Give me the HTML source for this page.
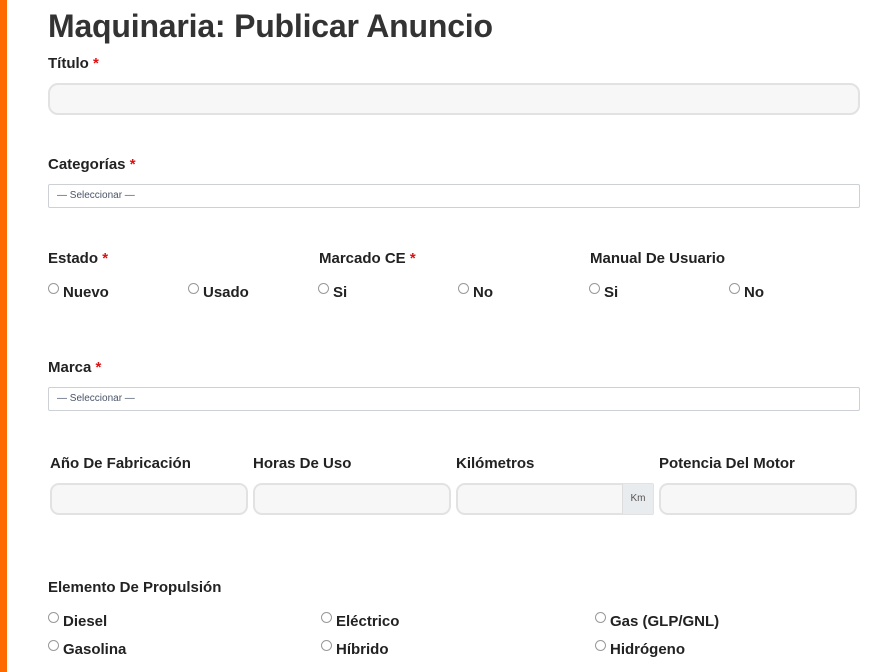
<!DOCTYPE html>
<html><head><meta charset="utf-8"><style>
*{margin:0;padding:0;box-sizing:border-box}
body{width:885px;height:672px;background:#fff;position:relative;overflow:hidden;font-family:"Liberation Sans",Arial,sans-serif;color:#222}
.bar{position:absolute;left:0;top:0;width:7px;height:672px;background:#ff6a00}
.a{position:absolute}
h1{position:absolute;left:48px;top:8px;font-size:32px;font-weight:bold;color:#333;letter-spacing:-0.2px}
.l{position:absolute;font-size:15px;font-weight:bold;line-height:18px;color:#222}
.l b{color:#d11;font-weight:bold}
.in{position:absolute;height:32px;background:#f7f7f7;border:2px solid #e2e2e2;border-radius:9px}
.sel{position:absolute;left:48px;width:812px;height:24px;border:1px solid #cdd0d4;border-radius:2px;font-size:10px;color:#4a5568;padding-left:8px;line-height:22px}
.r{position:absolute;font-size:15px;font-weight:bold;line-height:18px;padding-left:15px}
.r:before{content:"";position:absolute;left:0;top:-1px;width:9px;height:9px;border:1px solid #999;border-radius:50%;background:#fff}
</style></head><body>
<div class="bar"></div>
<h1>Maquinaria: Publicar Anuncio</h1>
<div class="l" style="left:48px;top:55px">Título <b>*</b></div>
<div class="in" style="left:48px;top:83px;width:812px;border-radius:10px"></div>
<div class="l" style="left:48px;top:156px">Categorías <b>*</b></div>
<div class="sel" style="top:184px">— Seleccionar —</div>
<div class="l" style="left:48px;top:250px">Estado <b>*</b></div>
<div class="l" style="left:319px;top:250px">Marcado CE <b>*</b></div>
<div class="l" style="left:590px;top:250px">Manual De Usuario</div>
<div class="r" style="left:48px;top:284px">Nuevo</div>
<div class="r" style="left:188px;top:284px">Usado</div>
<div class="r" style="left:318px;top:284px">Si</div>
<div class="r" style="left:458px;top:284px">No</div>
<div class="r" style="left:589px;top:284px">Si</div>
<div class="r" style="left:729px;top:284px">No</div>
<div class="l" style="left:48px;top:359px">Marca <b>*</b></div>
<div class="sel" style="top:387px">— Seleccionar —</div>
<div class="l" style="left:50px;top:455px">Año De Fabricación</div>
<div class="l" style="left:253px;top:455px">Horas De Uso</div>
<div class="l" style="left:456px;top:455px">Kilómetros</div>
<div class="l" style="left:659px;top:455px">Potencia Del Motor</div>
<div class="in" style="left:50px;top:483px;width:198px"></div>
<div class="in" style="left:253px;top:483px;width:198px"></div>
<div class="in" style="left:456px;top:483px;width:198px;border-radius:9px 2px 2px 9px"></div>
<div class="a" style="left:622px;top:484px;width:31px;height:30px;background:#e9ecef;border-left:1px solid #ddd;font-size:10px;color:#555;text-align:center;line-height:30px">Km</div>
<div class="in" style="left:659px;top:483px;width:198px"></div>
<div class="l" style="left:48px;top:579px">Elemento De Propulsión</div>
<div class="r" style="left:48px;top:613px">Diesel</div>
<div class="r" style="left:321px;top:613px">Eléctrico</div>
<div class="r" style="left:595px;top:613px">Gas (GLP/GNL)</div>
<div class="r" style="left:48px;top:641px">Gasolina</div>
<div class="r" style="left:321px;top:641px">Híbrido</div>
<div class="r" style="left:595px;top:641px">Hidrógeno</div>
</body></html>
